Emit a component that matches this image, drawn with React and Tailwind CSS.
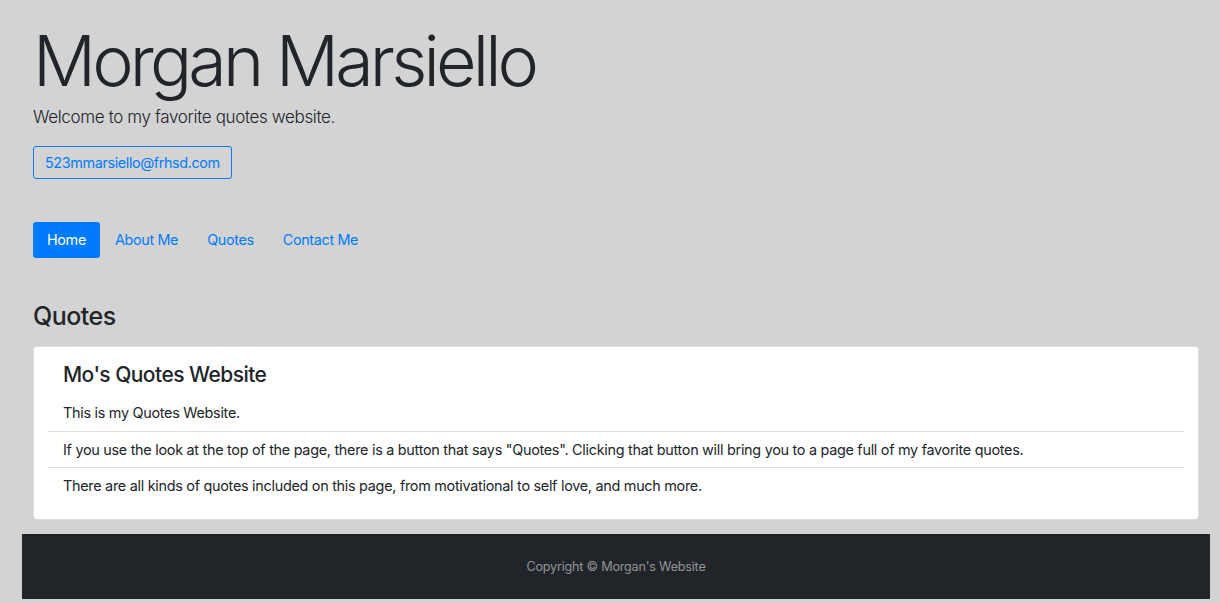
export default function App() {
  const items = [
    'This is my Quotes Website.',
    'If you use the look at the top of the page, there is a button that says "Quotes". Clicking that button will bring you to a page full of my favorite quotes.',
    'There are all kinds of quotes included on this page, from motivational to self love, and much more.',
  ];

  return (
    <div className="min-h-[603px] bg-[#d3d3d3] text-[#212529] font-['Inter',sans-serif] text-[14.4px] leading-[1.5] tracking-[-0.28px]">
      {/* Jumbotron-ish header */}
      <div className="px-[33px] pt-[19px]">
        <h1 className="text-[70px] font-light leading-[1.2] tracking-[-3.85px]">Morgan Marsiello</h1>
        <p className="text-[17px] font-light leading-[1.5] mt-[2px] tracking-[-0.35px]">Welcome to my favorite quotes website.</p>
        <a className="inline-block mt-[15px] px-[11px] py-[5px] border border-[#007bff] rounded-[3px] text-[#007bff] text-[14.4px] leading-[1.5] tracking-[-0.38px]">
          523mmarsiello@frhsd.com
        </a>

        {/* Nav pills */}
        <nav className="flex mt-[43px] tracking-[-0.35px]">
          <a className="px-[14px] py-[7px] rounded-[3px] bg-[#007bff] text-white">Home</a>
          <a className="pl-[15px] pr-[14px] py-[7px] text-[#007bff]">About Me</a>
          <a className="pl-[15px] pr-[14px] py-[7px] text-[#007bff]">Quotes</a>
          <a className="pl-[15px] pr-[14px] py-[7px] text-[#007bff]">Contact Me</a>
        </nav>

        <h3 className="mt-[43px] text-[25px] font-medium leading-[1.2] tracking-[-0.5px]">Quotes</h3>

        {/* Card */}
        <div className="mt-[15px] mr-[-12px] bg-white border border-black/[0.125] rounded-[4px] px-[14px] pt-[15px] pb-[15px]">
          <h4 className="px-[15px] text-[21px] font-medium leading-[1.2] tracking-[-0.55px]">Mo's Quotes Website</h4>
          <ul className="mt-[8px]">
            {items.map((text, i) => (
              <li key={i} className={`px-[15px] py-[7px] ${i > 0 ? 'border-t border-black/[0.125]' : ''}`}>
                {text}
              </li>
            ))}
          </ul>
        </div>
      </div>

      {/* Footer */}
      <footer className="mt-[14px] ml-[22px] mr-[10px] h-[65px] pt-[3px] bg-[#212529] flex items-center justify-center">
        <p className="text-[12.6px] text-white/50 tracking-[-0.2px]">Copyright © Morgan's Website</p>
      </footer>
    </div>
  );
}
